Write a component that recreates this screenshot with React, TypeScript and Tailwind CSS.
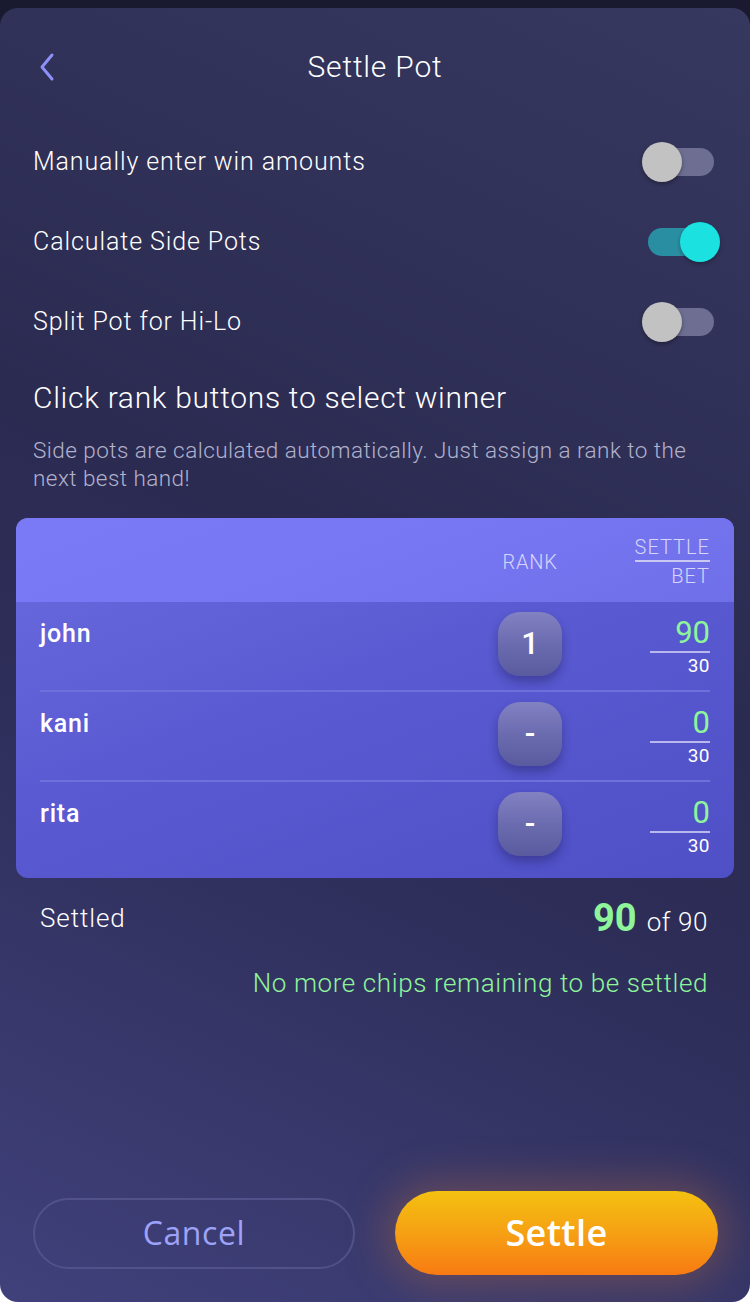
import React from 'react'

type Player = { name: string; rank: string; settle: number; bet: number }

const players: Player[] = [
    { name: 'john', rank: '1', settle: 90, bet: 30 },
    { name: 'kani', rank: '-', settle: 0, bet: 30 },
    { name: 'rita', rank: '-', settle: 0, bet: 30 },
]

function Toggle({ on }: { on: boolean }) {
    if (on) {
        return (
            <div className="relative h-[40px] w-[78px]">
                <div className="absolute left-[6px] top-[6px] h-[28px] w-[60px] rounded-full bg-[#2a8ea3]" />
                <div className="absolute right-[0px] top-0 h-[40px] w-[40px] rounded-full bg-[#1be2e0] shadow-[0_2px_4px_rgba(0,0,0,0.3)]" />
            </div>
        )
    }
    return (
        <div className="relative h-[40px] w-[78px]">
            <div className="absolute left-[6px] top-[6px] h-[28px] w-[66px] rounded-full bg-[#6e6e92]" />
            <div className="absolute left-0 top-0 h-[40px] w-[40px] rounded-full bg-[#c2c2c2] shadow-[0_2px_4px_rgba(0,0,0,0.35)]" />
        </div>
    )
}

function ToggleRow({ label, on }: { label: string; on: boolean }) {
    return (
        <div className="flex h-[80px] items-center justify-between pl-[33px] pr-[30px]">
            <span className="text-[25px] font-light tracking-[0.9px] text-white">{label}</span>
            <Toggle on={on} />
        </div>
    )
}

export default function App() {
    return (
        <div
            className="h-[1302px] w-[750px] bg-[linear-gradient(to_bottom,#191a30_50%,#ffffff_50%)] pt-[8px]"
            style={{ fontFamily: 'Roboto, "Noto Sans", sans-serif' }}
        >
            <div className="flex h-[1294px] flex-col rounded-[18px] bg-[linear-gradient(205deg,#37385f_0%,#2b2b52_45%,#2d2d58_60%,#40417b_100%)]">
                {/* header */}
                <div className="relative flex h-[114px] items-center justify-center pt-[2px]">
                    <svg
                        className="absolute left-[38px] top-[44px]"
                        width="18"
                        height="30"
                        viewBox="0 0 18 30"
                        fill="none"
                    >
                        <path d="M14 3 L4 15 L14 27" stroke="#8d90f7" strokeWidth="3" strokeLinecap="round" strokeLinejoin="round" />
                    </svg>
                    <span className="text-[30px] font-light tracking-[0.8px] text-white">Settle Pot</span>
                </div>

                <ToggleRow label="Manually enter win amounts" on={false} />
                <ToggleRow label="Calculate Side Pots" on={true} />
                <ToggleRow label="Split Pot for Hi-Lo" on={false} />

                <div className="px-[33px] pt-[16px]">
                    <div className="text-[30px] font-light leading-[40px] tracking-[0.7px] text-white">
                        Click rank buttons to select winner
                    </div>
                    <div className="mt-[18px] text-[22.5px] font-light leading-[28px] tracking-[0.45px] text-[#b2b2cc]">
                        Side pots are calculated automatically. Just assign a rank to the next best hand!
                    </div>
                </div>

                {/* table */}
                <div className="mx-[16px] mt-[26px] overflow-hidden rounded-[12px] bg-[linear-gradient(160deg,#6c6ce0_0%,#5a5ad2_45%,#4f4fc6_100%)]">
                    <div className="flex h-[84px] items-center bg-[linear-gradient(160deg,#7a7af6_0%,#7777f4_50%,#6f6fe8_100%)] pl-[24px] pr-[24px] pt-[4px]">
                        <div className="flex-1" />
                        <div className="w-[64px] text-center text-[20px] font-light tracking-[0.8px] text-[#d6d6fa]">RANK</div>
                        <div className="ml-[76px] flex w-[72px] flex-col items-end">
                            <span className="border-b-2 border-[#c8c8f2] text-[20px] font-light leading-[26px] tracking-[1px] text-[#d6d6fa]">
                                SETTLE
                            </span>
                            <span className="text-[20px] font-light leading-[28px] tracking-[1px] text-[#d6d6fa]">BET</span>
                        </div>
                    </div>
                    <div className="px-[24px] pb-[6px]">
                        {players.map((p, i) => (
                            <div
                                key={p.name}
                                className={
                                    'flex h-[90px] items-start ' +
                                    (i < players.length - 1 ? 'border-b-2 border-[#7070dc]' : '')
                                }
                            >
                                <div className="flex-1 pt-[13px] text-[25px] font-medium tracking-[0.8px] text-white">{p.name}</div>
                                <div className="mt-[10px] flex h-[64px] w-[64px] items-center justify-center rounded-[22px] bg-[linear-gradient(to_bottom,#8281c2_0%,#6b6bb0_50%,#5a5a9e_100%)] text-[31px] font-medium text-white shadow-[0_6px_10px_rgba(30,30,90,0.4)]">
                                    {p.rank}
                                </div>
                                <div className="ml-[88px] flex w-[60px] flex-col items-end pt-[13px]">
                                    <div className="w-full border-b-2 border-[#b8b8ee] text-right text-[31px] font-normal leading-[36px] text-[#8ef59a]">
                                        {p.settle}
                                    </div>
                                    <div className="text-[19px] font-normal leading-[26px] tracking-[0.5px] text-white">{p.bet}</div>
                                </div>
                            </div>
                        ))}
                    </div>
                </div>

                <div className="mt-[18px] flex h-[44px] items-center justify-between pl-[40px] pr-[42px]">
                    <span className="text-[26px] font-light tracking-[0.9px] text-white">Settled</span>
                    <span className="flex items-baseline text-white">
                        <span className="text-[38px] font-bold text-[#8ef59a]">90</span>
                        <span className="ml-[10px] text-[26px] font-light tracking-[0.6px]">of 90</span>
                    </span>
                </div>
                <div className="mt-[27px] pr-[42px] text-right text-[26px] font-light leading-[32px] tracking-[0.6px] text-[#8ef59a]">
                    No more chips remaining to be settled
                </div>

                <div className="flex-1" />

                {/* buttons */}
                <div
                    className="flex items-center justify-between pb-[27px] pl-[33px] pr-[32px]"
                    style={{ fontFamily: '"Open Sans", Roboto, sans-serif' }}
                >
                    <button className="h-[71px] w-[322px] rounded-full border-2 border-[#52528a] text-[32px] font-normal tracking-[0.6px] text-[#9ea2f8]">
                        Cancel
                    </button>
                    <button className="h-[84px] w-[323px] rounded-full bg-[linear-gradient(to_bottom,#f4c110_0%,#f6a014_50%,#f87a12_100%)] text-[36px] font-semibold tracking-[0.4px] text-white shadow-[0_0_40px_10px_rgba(190,110,60,0.35)]">
                        Settle
                    </button>
                </div>
            </div>
        </div>
    )
}
